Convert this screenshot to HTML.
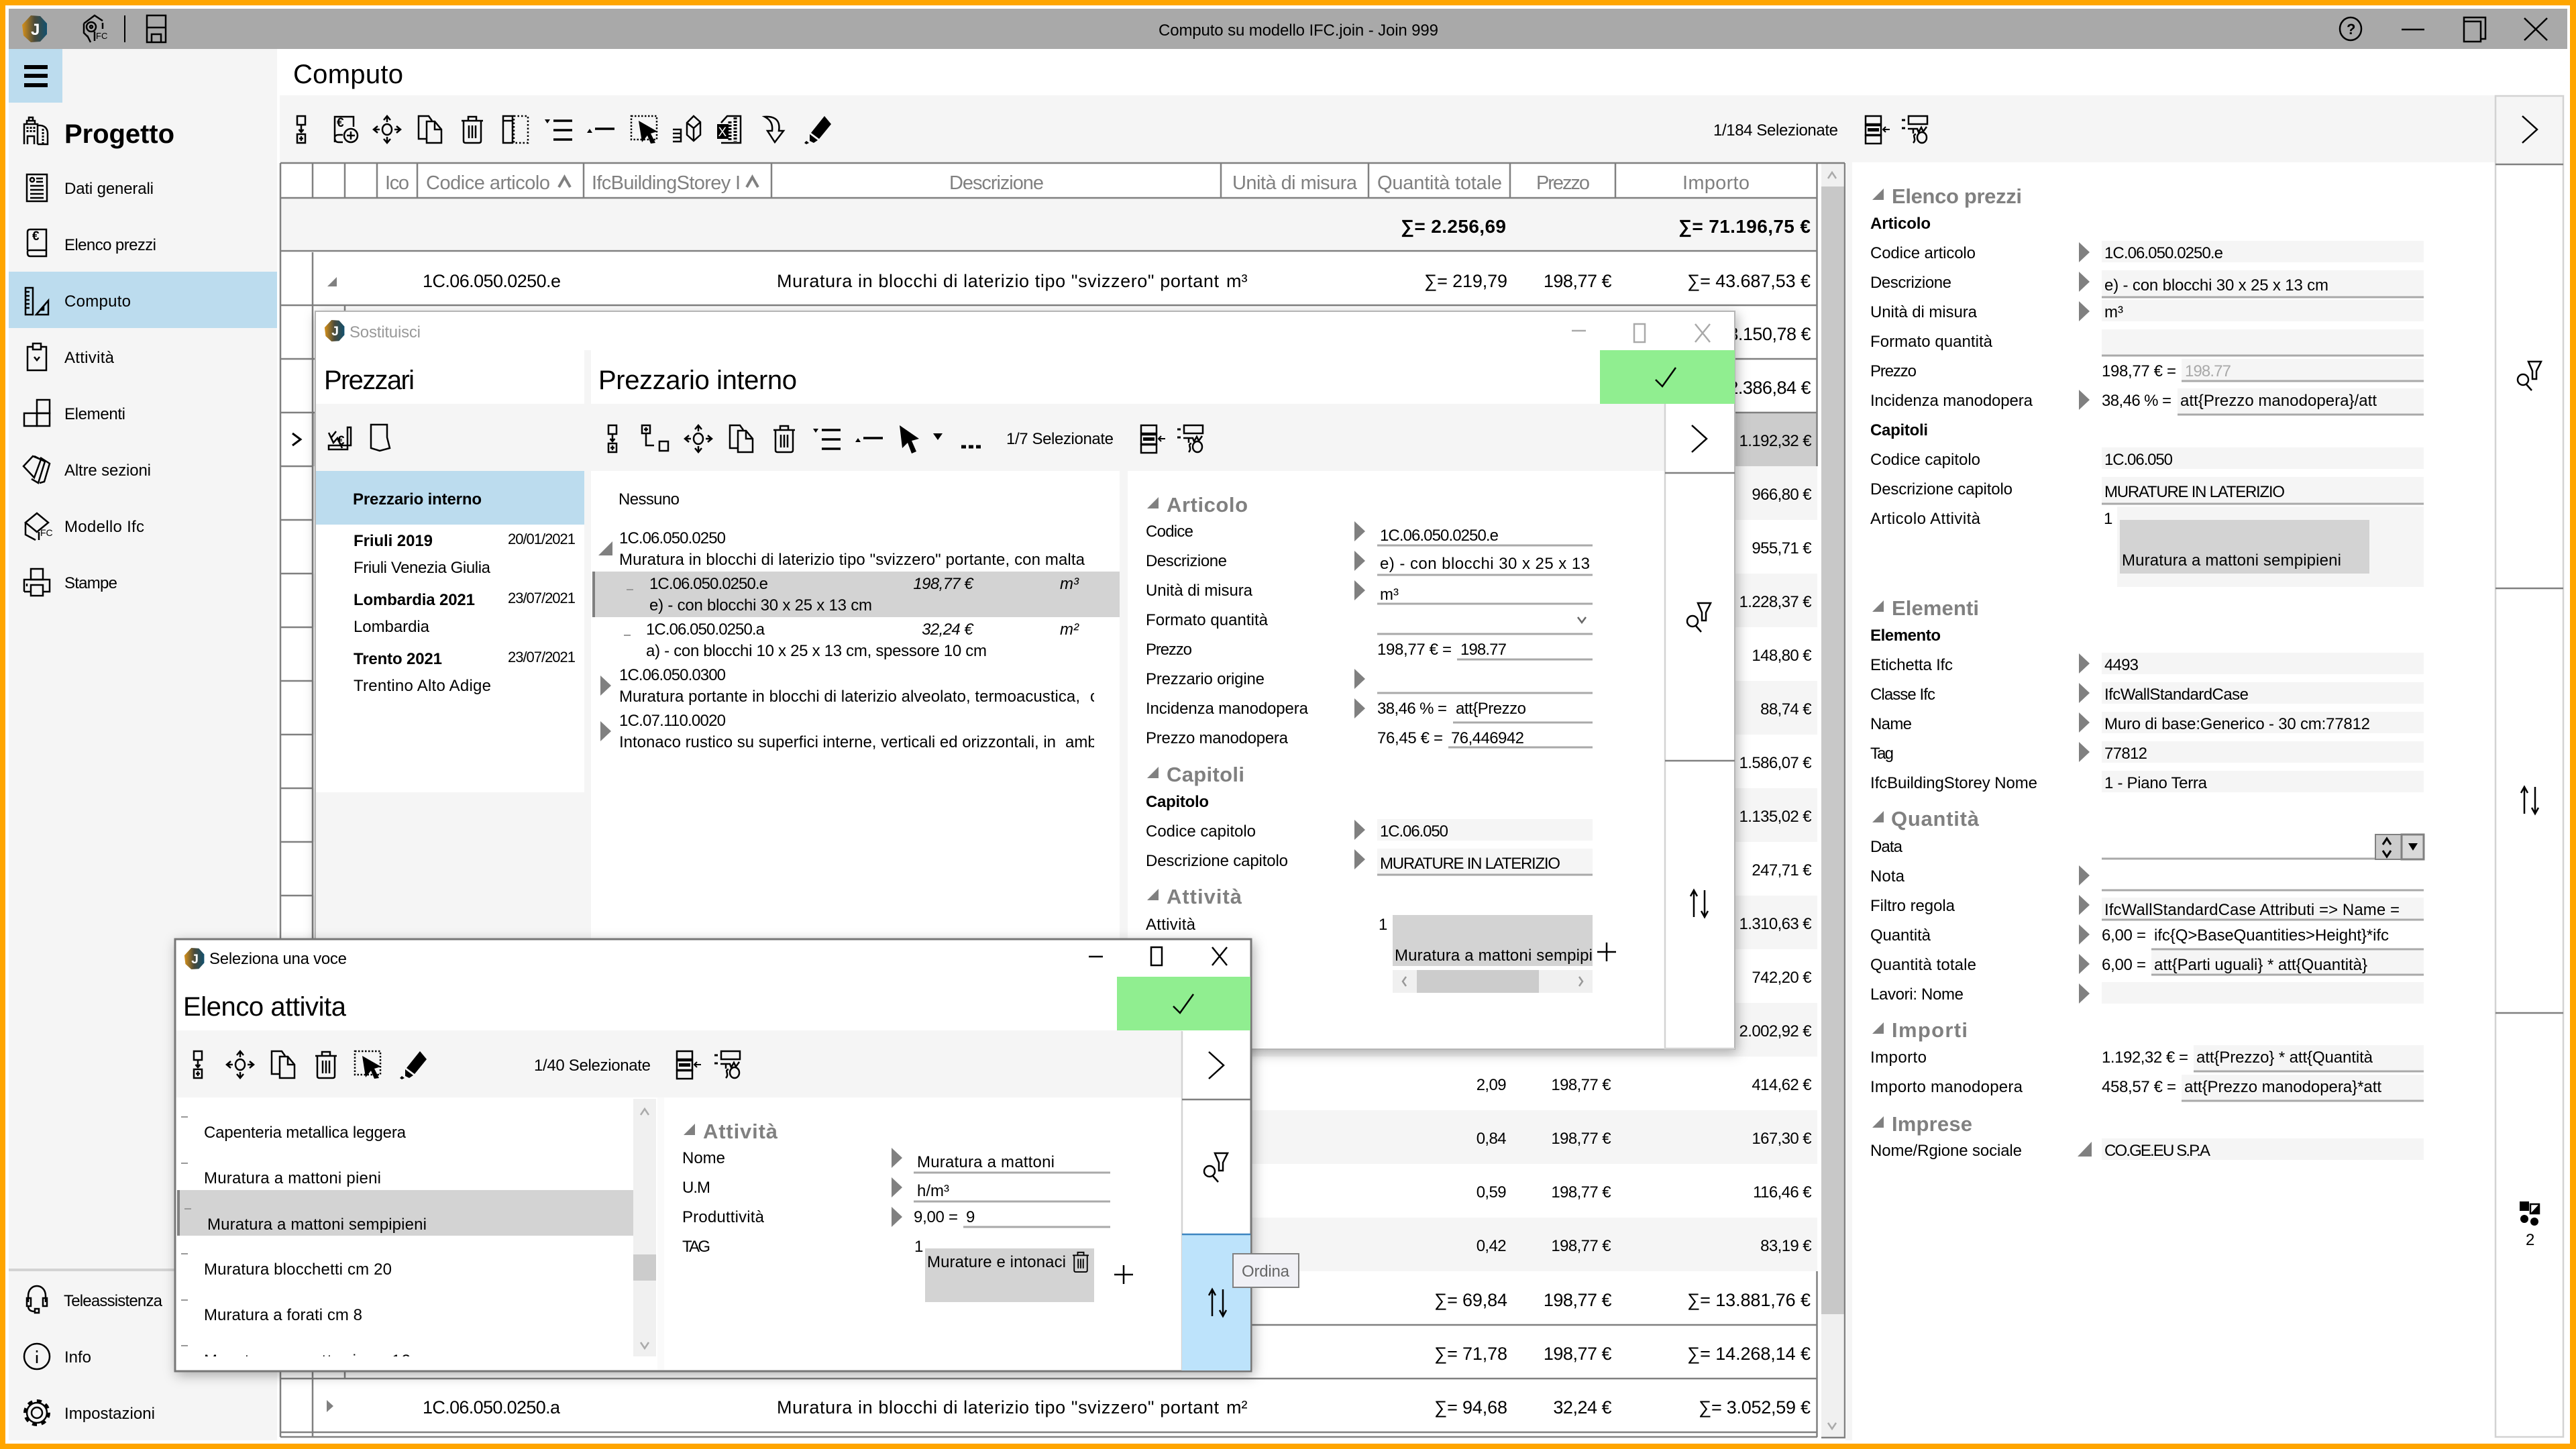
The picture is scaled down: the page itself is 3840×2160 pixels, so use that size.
<!DOCTYPE html>
<html><head><meta charset="utf-8"><title>Computo</title>
<style>
html,body{margin:0;padding:0;background:#fff;width:3840px;height:2160px;overflow:hidden}
svg{display:block;font-family:"Liberation Sans","DejaVu Sans",sans-serif}
text{font-size:24px;fill:#000;white-space:pre}
.r{font-size:27px}
.e{text-anchor:end;letter-spacing:-.6px}
.re{font-size:27px;text-anchor:end;letter-spacing:-.5px}
.h{font-size:29px;fill:#808080}
.T{font-size:40px}
.g{font-size:31px;font-weight:bold;fill:#808080}
.s{font-weight:bold}
.tb{font-size:28px;font-weight:bold}
.d{font-size:22px}
.it{font-style:italic}
.ic{fill:none;stroke:#000;stroke-width:2.5}
.ic .f{fill:#000;stroke:none}
.ic text{stroke:none}
.ln{stroke:#808080;stroke-width:2.5;fill:none}
.ul{stroke:#a9a9a9;stroke-width:3;fill:none}
.lg{stroke:#d3d3d3;stroke-width:2.5;fill:none}
</style></head><body>
<svg width="3840" height="2160" viewBox="0 0 3840 2160" xmlns="http://www.w3.org/2000/svg">
<defs>
<linearGradient id="lg1" x1="0" x2="1" y1="0" y2="0"><stop offset="0" stop-color="#d8921a"/><stop offset=".5" stop-color="#4a4a3a"/><stop offset="1" stop-color="#12506e"/></linearGradient>
<filter id="sh" x="-5%" y="-5%" width="110%" height="110%"><feDropShadow dx="3" dy="5" stdDeviation="9" flood-color="#000" flood-opacity=".3"/></filter>
<clipPath id="c1"><rect x="881" y="1000" width="750" height="120"/></clipPath>
<clipPath id="c2"><rect x="262" y="1638" width="682" height="384"/></clipPath>
<path id="tr" d="M0-15L16 0 0 15Z" fill="#808080"/>
<path id="tx" d="M0 17L17 17 17 0Z" fill="#808080"/>
<g id="logo"><path d="M-6-20L8-19 18-8 18 8 8 19-6 20-17 10-19-6Z" fill="url(#lg1)"/><text x="-6" y="9" style="font-size:24px;font-weight:bold;fill:#fff">J</text></g>
<g id="addc" class="ic"><rect x="-6" y="-20" width="12" height="13"/><path d="M0-7V3M-3.500 0L0 4 3.500 0"/><rect x="-6" y="7" width="12" height="13"/><path d="M-3 13.500H3M0 10V17"/></g>
<g id="addp" class="ic"><path d="M13-4V-19H-15V19M-15 12C-15 9-12 8-9 8H-3M-15 12C-15 18-12 19-9 19H-3"/><circle cx="9" cy="9" r="10"/><path d="M3 9H15M9 3V15"/><text x="-12" y="-4" style="font-size:19px;font-weight:bold">€</text></g>
<g id="move" class="ic"><ellipse rx="7" ry="8"/><path d="M0-11V-20M-5-14L0-20 5-14M0 11V20M-5 14L0 20 5 14M-11 0H-20M-14-5L-20 0-14 5M11 0H20M14-5L20 0 14 5"/></g>
<g id="copy" class="ic"><path d="M-5 14H-17V-20H-2L3-13"/><path d="M-5-12H7L17 0V20H-5Z"/><path d="M7-12V0H17"/></g>
<g id="trash" class="ic"><path d="M-16-13H16M-6-13V-19H6V-13"/><path d="M-13-13V17Q-13 20-10 20H10Q13 20 13 17V-13" /><path d="M-5-6V13M0-6V13M5-6V13"/></g>
<g id="cols" class="ic"><rect x="-19" y="-20" width="14" height="40"/><path d="M-19-13H-5"/><rect x="-3" y="-20" width="21" height="40" stroke-dasharray="2.500 3"/></g>
<g id="list" class="ic"><path class="f" d="M-21-15H-13L-17-9Z"/><path stroke-width="3.500" d="M-8-13H20M-8 1H20M-8 15H20"/></g>
<g id="dash" class="ic"><path class="f" d="M-21 5L-17-1-13 5Z"/><path stroke-width="3.500" d="M-9-1H20"/></g>
<g id="sel" class="ic"><rect x="-20" y="-20" width="38" height="35" stroke-dasharray="2.500 2.500"/><path class="f" d="M-9-13L19 3 9 6 16 20 9 21 4 9-4 19Z"/></g>
<g id="box" class="ic"><path d="M-21 0H-9V18H-21M-21 6H-8M-21 12H-8"/><path d="M0-10L10-20 20-11V8L10 17 0 8Z M0-10L10-2 20-11M10-2V17"/></g>
<g id="xls" class="ic"><path d="M-12-10L-3-20H17V20H-12"/><path stroke-dasharray="3 2" stroke-width="5" d="M9-18V18"/><path stroke-dasharray="3 2" stroke-width="5" d="M1-12V18"/><rect class="f" x="-18" y="-8" width="17" height="22"/><text x="-16.500" y="10" style="font-size:19px;fill:#fff">X</text></g>
<g id="down" class="ic"><path d="M-13-19C6-20 10-10 8 2L15 2 2 19-9 2-2 2C-1-8-4-14-13-19Z"/></g>
<g id="brush" class="ic"><path class="f" d="M12-20L22-8 4 14-8 5Z"/><path class="f" d="M-10 7L2 16-4 20-10 17ZM-15 17L-11 20-15 22-18 20Z"/></g>
<g id="cur" class="ic"><path class="f" d="M-14-20L15 0 4 3 11 19 4 22-2 6-10 14Z"/></g>
<g id="grpL" class="ic"><rect x="-12" y="-20" width="23" height="12"/><rect x="-12" y="-6" width="23" height="14"/><rect class="f" x="-9" y="-2" width="17" height="5"/><rect x="-12" y="9" width="23" height="12"/><path stroke-width="2" d="M24 0H14M18-4L14 0 18 4"/></g>
<g id="fltL" class="ic"><path stroke-width="3" d="M-21-14H-16M-21-2H-16"/><rect x="-11" y="-20" width="28" height="12"/><path d="M-12-1H-4V6M-4-1H2L4 4 8-3 11 3 16-4M0 7C-7 9 2 14-4 20"/><ellipse cx="9" cy="12" rx="7" ry="8"/></g>
<g id="chev" class="ic"><path d="M-11-20L11 0-11 20"/></g>
<g id="filt" class="ic"><ellipse cx="-10" cy="6" rx="8" ry="8"/><path d="M-5 13L3 22"/><path d="M-2-21H17L10-7V5H4V-7Z"/></g>
<g id="sort" class="ic"><path d="M-8-20V20M-13-11L-8-20-3-11M8-20V20M3 11L8 20 13 11"/></g>
<g id="bld" class="ic"><path d="M-18 20V-10H2V20M-13 20V8H-3V20M-14-10V-15H-2V-10M-11-15V-20H-5V-15"/><path d="M2-8C12-9 17-4 17 4V20H2"/><path stroke-dasharray="3 2" stroke-width="3" d="M-13-6V3M-8-6V3M-3-6V3M10-3V19"/></g>
<g id="dati" class="ic"><rect x="-15" y="-20" width="30" height="40" fill="none"/><circle cx="-7" cy="-12" r="3"/><path d="M-1-14H9M-1-9H9M-10-3H10M-10 3H10M-10 9H10M-10 15H10"/></g>
<g id="elen" class="ic"><path d="M-14 11V-16Q-14-20-10-20H14V20H-10Q-14 20-14 15V13Q-14 11-10 11H14"/><text x="-7" y="-4" style="font-size:19px;font-weight:bold">€</text></g>
<g id="comp" class="ic"><rect x="-17" y="-20" width="11" height="40"/><path d="M-17-14H-11M-17-8H-11M-17-2H-11M-17 4H-11M-17 10H-11"/><path d="M-1 20L17-1V20Z M10 13V9L6 13Z"/></g>
<g id="atti" class="ic"><path d="M-7-15H-14V20H14V-15H7"/><rect x="-6" y="-20" width="12" height="9"/><path d="M-4 0L0 5 4 0"/></g>
<g id="elem" class="ic"><rect x="-19" y="0" width="19" height="19"/><rect x="0" y="0" width="19" height="19"/><rect x="0" y="-20" width="19" height="20"/></g>
<g id="altr" class="ic"><path d="M-20-5L-6-20 6-15-4 12Z M-4-20L12-12 2 20-8 14"/><path d="M5-18L19-9 11 18 4 20"/></g>
<g id="ifc" class="ic"><path d="M-17-6L0-20 17-6 0 8Z M-17-6V12L-2 20"/><path d="M3 8V20"/><text x="5" y="14" style="font-size:14px">FC</text></g>
<g id="stam" class="ic"><rect x="-9" y="-20" width="18" height="16"/><path d="M-19 14V-4H19V14H10M-10 14H-19"/><rect x="-9" y="4" width="18" height="16"/><path d="M-15 2V6"/></g>
<g id="tele" class="ic"><path d="M-13 3V-6C-13-26 13-26 13-6V3"/><rect x="-15" y="-3" width="6" height="12"/><rect x="9" y="-3" width="6" height="12"/><path d="M-13 9C-13 16-7 17-3 17"/><rect x="-3" y="13" width="6" height="6"/></g>
<g id="info" class="ic"><ellipse rx="19" ry="19"/><path d="M0-2V10M0-9V-6"/></g>
<g id="impo" class="ic"><circle r="8"/><circle r="15"/><circle r="17.500" stroke-width="5" stroke-dasharray="7 6.700"/></g>
<g id="check" class="ic"><path d="M-18 4L-8 14 12-14" transform="translate(2 0)"/></g>
<g id="plus" class="ic"><path d="M-14 0H14M0-14V14"/></g>
<g id="grid" class="ic"><rect class="f" x="-15" y="-19" width="14" height="14"/><rect x="1" y="-15" width="13" height="14"/><path class="f" d="M14-15V-1H1Z"/><circle cx="-8" cy="7" r="6" class="f"/><circle cx="7" cy="11" r="6" class="f"/></g>
<g id="eye" class="ic"><path d="M-14-8L2-20 14-12M-14-8V6L-8 12"/><circle cx="-3" cy="-3" r="7"/><circle cx="-3" cy="-3" r="2"/><path d="M-4 20L-9 10 M2 4V18"/><text x="4" y="15" style="font-size:13px">FC</text><path d="M14-9V0"/></g>
<g id="flop" class="ic"><path d="M-14-20H14V20H-14Z"/><path d="M-14-2H14M-7 20V8H7V20"/></g>
</defs>

<!-- frame -->
<rect width="3840" height="2160" fill="#ffa500"/>
<rect x="8" y="8" width="3823" height="2144" fill="#fff"/>
<rect x="13" y="13" width="3814" height="60" fill="#a9a9a9"/>
<use href="#logo" x="52" y="43"/>
<use href="#eye" x="139" y="43"/>
<path d="M186 23V63" stroke="#000" stroke-width="2"/>
<use href="#flop" x="233" y="43"/>
<text x="1727" y="53" textLength="417">Computo su modello IFC.join - Join 999</text>
<g class="ic" stroke-width="2"><ellipse cx="3504" cy="43" rx="16" ry="17"/><path d="M3580 44H3614"/><path d="M3673 32H3698V62H3673ZM3673 32V26H3705V58H3698"/><path d="M3763 27L3797 60M3797 27L3763 60"/></g>
<text x="3498" y="51" style="font-size:22px;font-weight:bold">?</text>

<!-- sidebar -->
<rect x="13" y="73" width="400" height="2074" fill="#f5f5f5"/>
<rect x="13" y="73" width="80" height="80" fill="#bcdcee"/>
<path d="M36 100H71M36 113H71M36 127H71" stroke="#000" stroke-width="6"/>
<rect x="13" y="405" width="400" height="84" fill="#bcdcee"/>
<rect x="13" y="1891" width="400" height="4" fill="#d3d3d3"/>
<use href="#bld" x="54" y="195"/><text class="T s" x="96" y="213" textLength="164" style="font-weight:bold">Progetto</text>
<use href="#dati" x="55" y="280"/><text x="96" y="289" textLength="133">Dati generali</text>
<use href="#elen" x="55" y="362"/><text x="96" y="373" textLength="137">Elenco prezzi</text>
<use href="#comp" x="55" y="449"/><text x="96" y="457" textLength="99">Computo</text>
<use href="#atti" x="55" y="532"/><text x="96" y="541" textLength="74">Attività</text>
<use href="#elem" x="55" y="616"/><text x="96" y="625" textLength="91">Elementi</text>
<use href="#altr" x="55" y="700"/><text x="96" y="709" textLength="129">Altre sezioni</text>
<use href="#ifc" x="55" y="785"/><text x="96" y="793" textLength="119">Modello Ifc</text>
<use href="#stam" x="55" y="868"/><text x="96" y="877" textLength="79">Stampe</text>
<use href="#tele" x="55" y="1938"/><text x="95" y="1947" textLength="147">Teleassistenza</text>
<use href="#info" x="55" y="2022"/><text x="96" y="2031" textLength="40">Info</text>
<use href="#impo" x="55" y="2106"/><text x="96" y="2115" textLength="135">Impostazioni</text>

<!-- main header -->
<text class="T" x="437" y="124" textLength="164">Computo</text>
<rect x="417" y="142" width="3302" height="100" fill="#f5f5f5"/>
<use href="#addc" x="449" y="193"/><use href="#addp" x="514" y="193"/><use href="#move" x="577" y="193"/><use href="#copy" x="641" y="193"/><use href="#trash" x="704" y="193"/><use href="#cols" x="769" y="193"/><use href="#list" x="833" y="193"/><use href="#dash" x="896" y="193"/><use href="#sel" x="961" y="193"/><use href="#box" x="1024" y="193"/><use href="#xls" x="1087" y="193"/><use href="#down" x="1153" y="193"/><use href="#brush" x="1217" y="193"/>
<text x="2554" y="202" textLength="186">1/184 Selezionate</text>
<use href="#grpL" x="2793" y="193"/><use href="#fltL" x="2856" y="193"/>

<!-- table -->
<rect x="418" y="296" width="2291" height="76" fill="#f5f5f5"/>
<rect x="466" y="615" width="2243" height="80" fill="#ccc"/>
<g fill="#f5f5f5"><rect x="466" y="695" width="2243" height="80"/><rect x="466" y="855" width="2243" height="80"/><rect x="466" y="1015" width="2243" height="80"/><rect x="466" y="1175" width="2243" height="80"/><rect x="466" y="1335" width="2243" height="80"/><rect x="466" y="1495" width="2243" height="80"/><rect x="466" y="1655" width="2243" height="80"/><rect x="466" y="1815" width="2243" height="80"/></g>
<path class="ln" d="M418 243H2709M418 295H2709M418 243V2142M466 243V295M514 243V295M562 243V295M622 243V295M870 243V295M1150 243V295M1820 243V295M2040 243V295M2251 243V295M2408 243V295M2708.500 243V695M2708.500 1895V2142"/>
<path class="ln" stroke-width="4" d="M418 374H2709"/>
<path class="ln" d="M466 376V2142M418 455H2709M418 535H2709M418 615H2709M418 695H466M418 775H466M418 855H466M418 935H466M418 1015H466M418 1095H466M418 1175H466M418 1255H466M418 1335H466M418 1415H466M418 1495H466M418 1575H466M418 1655H466M418 1735H466M418 1815H466M418 1895H466M418 1975H2709M418 2055H2709M418 2135H2709M418 2142H2709M514 455V470M514 2040V2055"/>
<text class="h" x="574" y="282" textLength="36">Ico</text>
<text class="h" x="635" y="282" textLength="185">Codice articolo</text><path d="M833 279L841.500 264 850 279" fill="none" stroke="#808080" stroke-width="4"/>
<text class="h" x="882" y="282" textLength="222">IfcBuildingStorey I</text><path d="M1113 279L1121.500 264 1130 279" fill="none" stroke="#808080" stroke-width="4"/>
<text class="h" x="1415" y="282" textLength="141">Descrizione</text>
<text class="h" x="1837" y="282" textLength="186">Unità di misura</text>
<text class="h" x="2053" y="282" textLength="186">Quantità totale</text>
<text class="h" x="2290" y="282" textLength="80">Prezzo</text>
<text class="h" x="2508" y="282" textLength="100">Importo</text>
<text class="tb" x="2088" y="347" textLength="157">∑= 2.256,69</text>
<text class="tb" x="2502" y="347" textLength="197">∑= 71.196,75 €</text>
<path d="M488 427H502V413Z" fill="#808080"/>
<text class="r" x="630" y="428" textLength="206">1C.06.050.0250.e</text>
<text class="r" x="1158" y="428" textLength="659">Muratura in blocchi di laterizio tipo "svizzero" portant</text><text class="r" x="1828" y="428">m³</text>
<text class="r" x="2123" y="428" textLength="124">∑= 219,79</text><text class="re" x="2402" y="428">198,77 €</text><text class="r" x="2515" y="428" textLength="184">∑= 43.687,53 €</text>
<text class="re" x="2699" y="507">3.150,78 €</text>
<text class="re" x="2699" y="587">2.386,84 €</text>
<path d="M436 646L448 655 436 664" fill="none" stroke="#000" stroke-width="3"/>
<text class="e" x="2700" y="665">1.192,32 €</text>
<text class="e" x="2700" y="745">966,80 €</text>
<text class="e" x="2700" y="825">955,71 €</text>
<text class="e" x="2700" y="905">1.228,37 €</text>
<text class="e" x="2700" y="985">148,80 €</text>
<text class="e" x="2700" y="1065">88,74 €</text>
<text class="e" x="2700" y="1145">1.586,07 €</text>
<text class="e" x="2700" y="1225">1.135,02 €</text>
<text class="e" x="2700" y="1305">247,71 €</text>
<text class="e" x="2700" y="1385">1.310,63 €</text>
<text class="e" x="2700" y="1465">742,20 €</text>
<text class="e" x="2700" y="1545">2.002,92 €</text>
<text class="e" x="2245" y="1625">2,09</text><text class="e" x="2401" y="1625">198,77 €</text><text class="e" x="2700" y="1625">414,62 €</text>
<text class="e" x="2245" y="1705">0,84</text><text class="e" x="2401" y="1705">198,77 €</text><text class="e" x="2700" y="1705">167,30 €</text>
<text class="e" x="2245" y="1785">0,59</text><text class="e" x="2401" y="1785">198,77 €</text><text class="e" x="2700" y="1785">116,46 €</text>
<text class="e" x="2245" y="1865">0,42</text><text class="e" x="2401" y="1865">198,77 €</text><text class="e" x="2700" y="1865">83,19 €</text>
<text class="r" x="2138" y="1947" textLength="109">∑= 69,84</text><text class="re" x="2402" y="1947">198,77 €</text><text class="r" x="2515" y="1947" textLength="184">∑= 13.881,76 €</text>
<text class="r" x="2138" y="2027" textLength="109">∑= 71,78</text><text class="re" x="2402" y="2027">198,77 €</text><text class="r" x="2515" y="2027" textLength="184">∑= 14.268,14 €</text>
<path d="M487 2087L497 2096 487 2105Z" fill="#808080"/>
<text class="r" x="630" y="2107" textLength="205">1C.06.050.0250.a</text>
<text class="r" x="1158" y="2107" textLength="659">Muratura in blocchi di laterizio tipo "svizzero" portant</text><text class="r" x="1828" y="2107">m²</text>
<text class="r" x="2138" y="2107" textLength="109">∑= 94,68</text><text class="re" x="2402" y="2107">32,24 €</text><text class="r" x="2532" y="2107" textLength="167">∑= 3.052,59 €</text>

<!-- table scrollbar -->
<rect x="2715" y="243" width="35" height="1899" fill="#f0f0f0"/>
<rect x="2715" y="278" width="35" height="1681" fill="#c8c8c8"/>
<path d="M2750 243V2143H2715M2709 243H2750" class="ln"/>
<path d="M2725 266L2731 257 2737 266M2725 2121L2731 2130 2737 2121" fill="none" stroke="#aaa" stroke-width="2.500"/>
<rect x="2751" y="242" width="10" height="1905" fill="#f5f5f5"/>

<!-- right panel -->
<g fill="#f5f5f5">
<rect x="3133" y="359" width="480" height="32"/><rect x="3133" y="403" width="480" height="39"/><rect x="3133" y="447" width="480" height="32"/><rect x="3133" y="491" width="480" height="38"/><rect x="3252" y="535" width="361" height="32"/><rect x="3246" y="579" width="367" height="38"/><rect x="3133" y="667" width="480" height="32"/><rect x="3133" y="711" width="480" height="39"/><rect x="3156" y="755" width="457" height="120"/>
<rect x="3133" y="973" width="480" height="32"/><rect x="3133" y="1017" width="480" height="32"/><rect x="3133" y="1061" width="480" height="32"/><rect x="3133" y="1105" width="480" height="32"/><rect x="3133" y="1149" width="480" height="32"/>
<rect x="3133" y="1338" width="480" height="32"/><rect x="3207" y="1417" width="406" height="35"/><rect x="3133" y="1464" width="480" height="32"/>
<rect x="3270" y="1558" width="343" height="38"/><rect x="3252" y="1602" width="361" height="38"/><rect x="3133" y="1697" width="480" height="32"/>
</g>
<rect x="3160" y="775" width="372" height="80" fill="#d3d3d3"/>
<path class="ul" d="M3133 443H3613M3133 530H3613M3252 568H3613M3246 618H3613M3133 751H3613M3133 1280H3541M3133 1327H3613M3133 1371H3613M3207 1415H3613M3207 1453H3613M3270 1597H3613M3252 1641H3613"/>
<use href="#tx" x="2791" y="281"/><text class="g" x="2820" y="303" textLength="194">Elenco prezzi</text>
<text class="s" x="2788" y="341" textLength="90">Articolo</text>
<text x="2788" y="385" textLength="157">Codice articolo</text><use href="#tr" x="3099" y="376"/><text x="3137" y="385" textLength="177">1C.06.050.0250.e</text>
<text x="2788" y="429" textLength="121">Descrizione</text><use href="#tr" x="3099" y="420"/><text x="3137" y="433" textLength="334">e) - con blocchi 30 x 25 x 13 cm</text>
<text x="2788" y="473" textLength="159">Unità di misura</text><use href="#tr" x="3099" y="464"/><text x="3137" y="473">m³</text>
<text x="2788" y="517" textLength="182">Formato quantità</text>
<text x="2788" y="561" textLength="69">Prezzo</text><text x="3133" y="561" textLength="111">198,77 € =</text><text x="3257" y="561" textLength="69" style="fill:#a9a9a9">198.77</text>
<text x="2788" y="605" textLength="242">Incidenza manodopera</text><use href="#tr" x="3099" y="596"/><text x="3133" y="605" textLength="104">38,46 % =</text><text x="3250" y="605" textLength="293">att{Prezzo manodopera}/att</text>
<text class="s" x="2788" y="649" textLength="86">Capitoli</text>
<text x="2788" y="693" textLength="164">Codice capitolo</text><text x="3137" y="693" textLength="102">1C.06.050</text>
<text x="2788" y="737" textLength="212">Descrizione capitolo</text><text x="3137" y="741" textLength="269">MURATURE IN LATERIZIO</text>
<text x="2788" y="781" textLength="164">Articolo Attività</text><text x="3136" y="781">1</text><text x="3163" y="843" textLength="327">Muratura a mattoni sempipieni</text>
<use href="#tx" x="2791" y="895"/><text class="g" x="2820" y="917" textLength="130">Elementi</text>
<text class="s" x="2788" y="955" textLength="105">Elemento</text>
<text x="2788" y="999" textLength="123">Etichetta Ifc</text><use href="#tr" x="3099" y="989"/><text x="3137" y="999" textLength="51">4493</text>
<text x="2788" y="1043" textLength="97">Classe Ifc</text><use href="#tr" x="3099" y="1033"/><text x="3137" y="1043" textLength="215">IfcWallStandardCase</text>
<text x="2788" y="1087" textLength="62">Name</text><use href="#tr" x="3099" y="1077"/><text x="3137" y="1087" textLength="396">Muro di base:Generico - 30 cm:77812</text>
<text x="2788" y="1131" textLength="35">Tag</text><use href="#tr" x="3099" y="1121"/><text x="3137" y="1131" textLength="64">77812</text>
<text x="2788" y="1175" textLength="249">IfcBuildingStorey Nome</text><text x="3137" y="1175" textLength="153">1 - Piano Terra</text>
<use href="#tx" x="2791" y="1209"/><text class="g" x="2819" y="1231" textLength="131">Quantità</text>
<text x="2788" y="1270" textLength="48">Data</text>
<rect x="3541" y="1244" width="39" height="37" fill="#ccc" stroke="#808080" stroke-width="2"/><rect x="3580" y="1244" width="33" height="37" fill="#d9d9d9" stroke="#808080" stroke-width="3"/>
<path d="M3552 1259L3558 1250 3564 1259M3552 1268L3558 1277 3564 1268" fill="none" stroke="#000" stroke-width="3"/><path d="M3590 1257H3604L3597 1268Z"/>
<text x="2788" y="1314" textLength="51">Nota</text><use href="#tr" x="3099" y="1305"/>
<text x="2788" y="1358" textLength="126">Filtro regola</text><use href="#tr" x="3099" y="1349"/><text x="3137" y="1364" textLength="440">IfcWallStandardCase Attributi =&gt; Name =</text>
<text x="2788" y="1402" textLength="90">Quantità</text><use href="#tr" x="3099" y="1393"/><text x="3133" y="1402" textLength="66">6,00 =</text><text x="3211" y="1402" textLength="350">ifc{Q&gt;BaseQuantities&gt;Height}*ifc</text>
<text x="2788" y="1446" textLength="158">Quantità totale</text><use href="#tr" x="3099" y="1437"/><text x="3133" y="1446" textLength="66">6,00 =</text><text x="3211" y="1446" textLength="318">att{Parti uguali} * att{Quantità}</text>
<text x="2788" y="1490" textLength="139">Lavori: Nome</text><use href="#tr" x="3099" y="1481"/>
<use href="#tx" x="2791" y="1524"/><text class="g" x="2820" y="1546" textLength="113">Importi</text>
<text x="2788" y="1584" textLength="84">Importo</text><text x="3133" y="1584" textLength="129">1.192,32 € =</text><text x="3274" y="1584" textLength="263">att{Prezzo} * att{Quantità</text>
<text x="2788" y="1628" textLength="227">Importo manodopera</text><text x="3133" y="1628" textLength="111">458,57 € =</text><text x="3256" y="1628" textLength="294">att{Prezzo manodopera}*att</text>
<use href="#tx" x="2791" y="1664"/><text class="g" x="2820" y="1686" textLength="120">Imprese</text>
<text x="2788" y="1723" textLength="226">Nome/Rgione sociale</text><path d="M3097 1724H3118V1702Z" fill="#808080"/><text x="3137" y="1723" textLength="158">CO.GE.EU S.P.A</text>

<!-- right column -->
<rect x="3720" y="143" width="101" height="102" fill="#f5f5f5"/>
<path class="lg" d="M3720 143H3821V2142H3720ZM3720 2142"/>
<path class="ln" stroke-width="3" d="M3720 245H3821M3720 877H3821M3720 1510H3821"/>
<use href="#chev" x="3771" y="193"/><use href="#filt" x="3771" y="560"/><use href="#sort" x="3771" y="1193"/><use href="#grid" x="3771" y="1810"/>
<text x="3765" y="1856">2</text>

<!-- dialog 1 -->
<g filter="url(#sh)"><rect x="470" y="464" width="2116" height="1100" fill="#fff" stroke="#b5b5b5" stroke-width="2"/></g>
<rect x="471" y="602" width="2011" height="100" fill="#f5f5f5"/>
<rect x="871" y="522" width="10" height="1042" fill="#f5f5f5"/>
<rect x="471" y="1181" width="400" height="382" fill="#f5f5f5"/>
<rect x="1669" y="702" width="12" height="862" fill="#f5f5f5"/>
<rect x="2385" y="522" width="201" height="80" fill="#90ee90"/>
<use href="#logo" x="499" y="493" transform="translate(499 493) scale(.8) translate(-499 -493)"/>
<text x="521" y="503" textLength="106" style="fill:#999">Sostituisci</text>
<path d="M2343 493H2364M2436 483H2452V510H2436ZM2527 483L2549 510M2549 483L2527 510" fill="none" stroke="#a9a9a9" stroke-width="2.500"/>
<text class="T" x="483" y="580" textLength="135">Prezzari</text>
<text class="T" x="892" y="580" textLength="296">Prezzario interno</text>
<use href="#check" x="2484" y="562"/>
<g class="ic"><path d="M490 645L497 660 503 653 510 668M494 652L501 643M518 637V670H490V664H523V637Z" /><text x="503" y="663" style="font-size:19px;font-weight:bold">€</text><path d="M553 633H577V652L581 668 566 672 553 668Z"/></g>
<use href="#addc" x="913" y="654"/>
<g class="ic"><rect x="957" y="634" width="12" height="12"/><path d="M960 640H966M963 637V643M963 646V664H975"/><rect x="983" y="658" width="13" height="14"/></g>
<use href="#move" x="1041" y="654"/><use href="#copy" x="1105" y="654"/><use href="#trash" x="1169" y="654"/><use href="#list" x="1233" y="654"/><use href="#dash" x="1296" y="654"/><use href="#cur" x="1355" y="654"/>
<path d="M1391 646H1405L1398 656Z"/><path d="M1433 666H1440M1444 666H1451M1455 666H1462" stroke="#000" stroke-width="5"/>
<text x="1500" y="662" textLength="160">1/7 Selezionate</text>
<use href="#grpL" x="1713" y="654"/><use href="#fltL" x="1776" y="654"/>
<path class="lg" d="M2482 602V1563H2586"/>
<path class="ln" stroke-width="3" d="M2482 705H2586M2482 1134H2586"/>
<use href="#chev" x="2533" y="654"/><use href="#filt" x="2533" y="920"/><use href="#sort" x="2533" y="1347"/>
<!-- prezzari list -->
<rect x="471" y="702" width="400" height="80" fill="#bcdcee"/>
<text class="s" x="526" y="752" textLength="192">Prezzario interno</text>
<text class="s" x="527" y="814" textLength="118">Friuli 2019</text><text class="d" x="757" y="811" textLength="101">20/01/2021</text><text x="527" y="854" textLength="204">Friuli Venezia Giulia</text>
<text class="s" x="527" y="902" textLength="181">Lombardia 2021</text><text class="d" x="757" y="899" textLength="101">23/07/2021</text><text x="527" y="942" textLength="113">Lombardia</text>
<text class="s" x="527" y="990" textLength="132">Trento 2021</text><text class="d" x="757" y="987" textLength="101">23/07/2021</text><text x="527" y="1030" textLength="205">Trentino Alto Adige</text>
<!-- tree -->
<text x="922" y="752" textLength="91">Nessuno</text>
<path d="M892 828H913V807Z" fill="#808080"/>
<text x="923" y="810" textLength="159">1C.06.050.0250</text>
<text x="923" y="842" textLength="694">Muratura in blocchi di laterizio tipo "svizzero" portante, con malta</text>
<rect x="883" y="852" width="786" height="68" fill="#d3d3d3"/><rect x="883" y="852" width="4" height="68" fill="#808080"/>
<path d="M934 879H944" stroke="#999" stroke-width="2"/>
<text x="968" y="878" textLength="177">1C.06.050.0250.e</text><text x="968" y="910" textLength="332">e) - con blocchi 30 x 25 x 13 cm</text>
<text class="e it" x="1450" y="878">198,77 €</text><text class="it" x="1580" y="878">m³</text>
<path d="M930 947H940" stroke="#999" stroke-width="2"/>
<text x="963" y="946" textLength="177">1C.06.050.0250.a</text><text x="963" y="978" textLength="508">a) - con blocchi 10 x 25 x 13 cm, spessore 10 cm</text>
<text class="e it" x="1450" y="946">32,24 €</text><text class="it" x="1580" y="946">m²</text>
<use href="#tr" x="895" y="1022"/>
<text x="923" y="1014" textLength="159">1C.06.050.0300</text>
<g clip-path="url(#c1)"><text x="923" y="1046" textLength="687">Muratura portante in blocchi di laterizio alveolato, termoacustica,</text><text x="1625" y="1046">con</text>
<text x="923" y="1114" textLength="651">Intonaco rustico su superfici interne, verticali ed orizzontali, in</text><text x="1588" y="1114">ambienti</text></g>
<use href="#tr" x="895" y="1090"/>
<text x="923" y="1082" textLength="159">1C.07.110.0020</text>
<!-- dialog1 details -->
<use href="#tx" x="1710" y="741"/><text class="g" x="1739" y="763" textLength="121">Articolo</text>
<text x="1708" y="800" textLength="71">Codice</text><use href="#tr" x="2019" y="792"/><text x="2057" y="806" textLength="177">1C.06.050.0250.e</text>
<text x="1708" y="844" textLength="121">Descrizione</text><use href="#tr" x="2019" y="836"/><text x="2057" y="848" textLength="313">e) - con blocchi 30 x 25 x 13</text>
<text x="1708" y="888" textLength="159">Unità di misura</text><use href="#tr" x="2019" y="880"/><text x="2057" y="894">m³</text>
<text x="1708" y="932" textLength="182">Formato quantità</text><path d="M2352 920L2358 928 2364 920" fill="none" stroke="#666" stroke-width="2.500"/>
<text x="1708" y="976" textLength="69">Prezzo</text><text x="2053" y="976" textLength="111">198,77 € =</text><text x="2177" y="976" textLength="69">198.77</text>
<text x="1708" y="1020" textLength="177">Prezzario origine</text><use href="#tr" x="2019" y="1012"/>
<text x="1708" y="1064" textLength="242">Incidenza manodopera</text><use href="#tr" x="2019" y="1056"/><text x="2053" y="1064" textLength="104">38,46 % =</text><text x="2170" y="1064" textLength="105">att{Prezzo</text>
<text x="1708" y="1108" textLength="212">Prezzo manodopera</text><text x="2053" y="1108" textLength="98">76,45 € =</text><text x="2163" y="1108" textLength="109">76,446942</text>
<path class="ul" d="M2053 813H2374M2053 857H2374M2053 900H2374M2053 945H2374M2172 983H2374M2053 1033H2374M2166 1077H2374M2159 1114H2374"/>
<use href="#tx" x="1710" y="1143"/><text class="g" x="1739" y="1165" textLength="116">Capitoli</text>
<text class="s" x="1708" y="1203" textLength="94">Capitolo</text>
<rect x="2053" y="1221" width="321" height="32" fill="#f5f5f5"/><rect x="2053" y="1265" width="321" height="39" fill="#f5f5f5"/><path class="ul" d="M2053 1304H2374"/>
<text x="1708" y="1247" textLength="164">Codice capitolo</text><use href="#tr" x="2019" y="1237"/><text x="2057" y="1247" textLength="102">1C.06.050</text>
<text x="1708" y="1291" textLength="212">Descrizione capitolo</text><use href="#tr" x="2019" y="1281"/><text x="2057" y="1295" textLength="269">MURATURE IN LATERIZIO</text>
<use href="#tx" x="1710" y="1325"/><text class="g" x="1739" y="1347" textLength="112">Attività</text>
<text x="1708" y="1386" textLength="74">Attività</text><text x="2055" y="1386">1</text>
<rect x="2076" y="1364" width="298" height="76" fill="#d3d3d3"/>
<text x="2079" y="1432" textLength="295">Muratura a mattoni sempipi</text>
<use href="#plus" x="2395" y="1419"/>
<rect x="2076" y="1446" width="298" height="34" fill="#f0f0f0"/><rect x="2112" y="1446" width="182" height="34" fill="#ccc"/>
<path d="M2096 1456L2091 1463 2096 1470M2354 1456L2359 1463 2354 1470" fill="none" stroke="#999" stroke-width="2.500"/>

<!-- dialog 2 -->
<g filter="url(#sh)"><rect x="261" y="1400" width="1604" height="644" fill="#fff" stroke="#777" stroke-width="3"/></g>
<rect x="263" y="1536" width="1499" height="100" fill="#f5f5f5"/>
<rect x="980" y="1636" width="10" height="406" fill="#fafafa"/>
<rect x="1665" y="1456" width="199" height="80" fill="#90ee90"/>
<use href="#logo" x="290" y="1429" transform="translate(290 1429) scale(.8) translate(-290 -1429)"/>
<text x="312" y="1437" textLength="205">Seleziona una voce</text>
<path d="M1623 1426H1644M1716 1412H1732V1439H1716ZM1807 1412L1829 1439M1829 1412L1807 1439" fill="none" stroke="#000" stroke-width="2.500"/>
<text class="T" x="273" y="1514" textLength="243">Elenco attivita</text>
<use href="#check" x="1765" y="1496"/>
<use href="#addc" x="295" y="1587"/><use href="#move" x="358" y="1587"/><use href="#copy" x="422" y="1587"/><use href="#trash" x="486" y="1587"/><use href="#sel" x="549" y="1587"/><use href="#brush" x="614" y="1587"/>
<text x="796" y="1596" textLength="174">1/40 Selezionate</text>
<use href="#grpL" x="1021" y="1587"/><use href="#fltL" x="1086" y="1587"/>
<path class="lg" d="M1762 1537V2043"/>
<path class="ln" stroke-width="3" d="M1762 1639H1864"/>
<use href="#chev" x="1813" y="1588"/><use href="#filt" x="1813" y="1740"/>
<rect x="1762" y="1840" width="102" height="203" fill="#bde3fb"/><path d="M1762 1840H1864" stroke="#3d85c0" stroke-width="2.500"/>
<use href="#sort" x="1815" y="1942"/>
<!-- list -->
<rect x="944" y="1638" width="34" height="384" fill="#f0f0f0"/><rect x="944" y="1870" width="34" height="39" fill="#ccc"/>
<path d="M955 1662L961 1653 967 1662M955 2001L961 2010 967 2001" fill="none" stroke="#aaa" stroke-width="2.500"/>
<rect x="264" y="1774" width="680" height="68" fill="#d3d3d3"/><rect x="264" y="1774" width="4" height="68" fill="#808080"/>
<path d="M270 1665H280M270 1734H280M275 1802H285M270 1869H280M270 1938H280M270 2006H280" stroke="#999" stroke-width="2"/>
<text x="304" y="1696" textLength="301">Capenteria metallica leggera</text>
<text x="304" y="1764" textLength="264">Muratura a mattoni pieni</text>
<text x="309" y="1833" textLength="327">Muratura a mattoni sempipieni</text>
<text x="304" y="1900" textLength="280">Muratura blocchetti cm 20</text>
<text x="304" y="1968" textLength="236">Muratura a forati cm 8</text>
<g clip-path="url(#c2)"><text x="304" y="2036" textLength="308">Muratura a mattoni cm 12</text></g>
<!-- details -->
<use href="#tx" x="1019" y="1675"/><text class="g" x="1048" y="1697" textLength="111">Attività</text>
<text x="1017" y="1734" textLength="64">Nome</text><use href="#tr" x="1329" y="1726"/><text x="1367" y="1740" textLength="205">Muratura a mattoni</text>
<text x="1017" y="1778" textLength="42">U.M</text><use href="#tr" x="1329" y="1770"/><text x="1367" y="1783">h/m³</text>
<text x="1017" y="1822" textLength="122">Produttività</text><use href="#tr" x="1329" y="1814"/><text x="1362" y="1822" textLength="66">9,00 =</text><text x="1440" y="1822">9</text>
<text x="1017" y="1866" textLength="42">TAG</text><text x="1363" y="1866">1</text>
<path class="ul" d="M1362 1748H1655M1362 1791H1655M1436 1829H1655"/>
<rect x="1379" y="1861" width="252" height="80" fill="#d3d3d3"/>
<text x="1382" y="1889" textLength="207">Murature e intonaci</text>
<use href="#trash" x="1611" y="1881" transform="translate(1611 1881) scale(.75) translate(-1611 -1881)"/>
<use href="#plus" x="1675" y="1900"/>
<!-- tooltip -->
<rect x="1838" y="1869" width="98" height="50" fill="#f0f0f5" stroke="#808080" stroke-width="2"/>
<text x="1851" y="1903" textLength="71" style="fill:#666">Ordina</text>
</svg>
</body></html>
